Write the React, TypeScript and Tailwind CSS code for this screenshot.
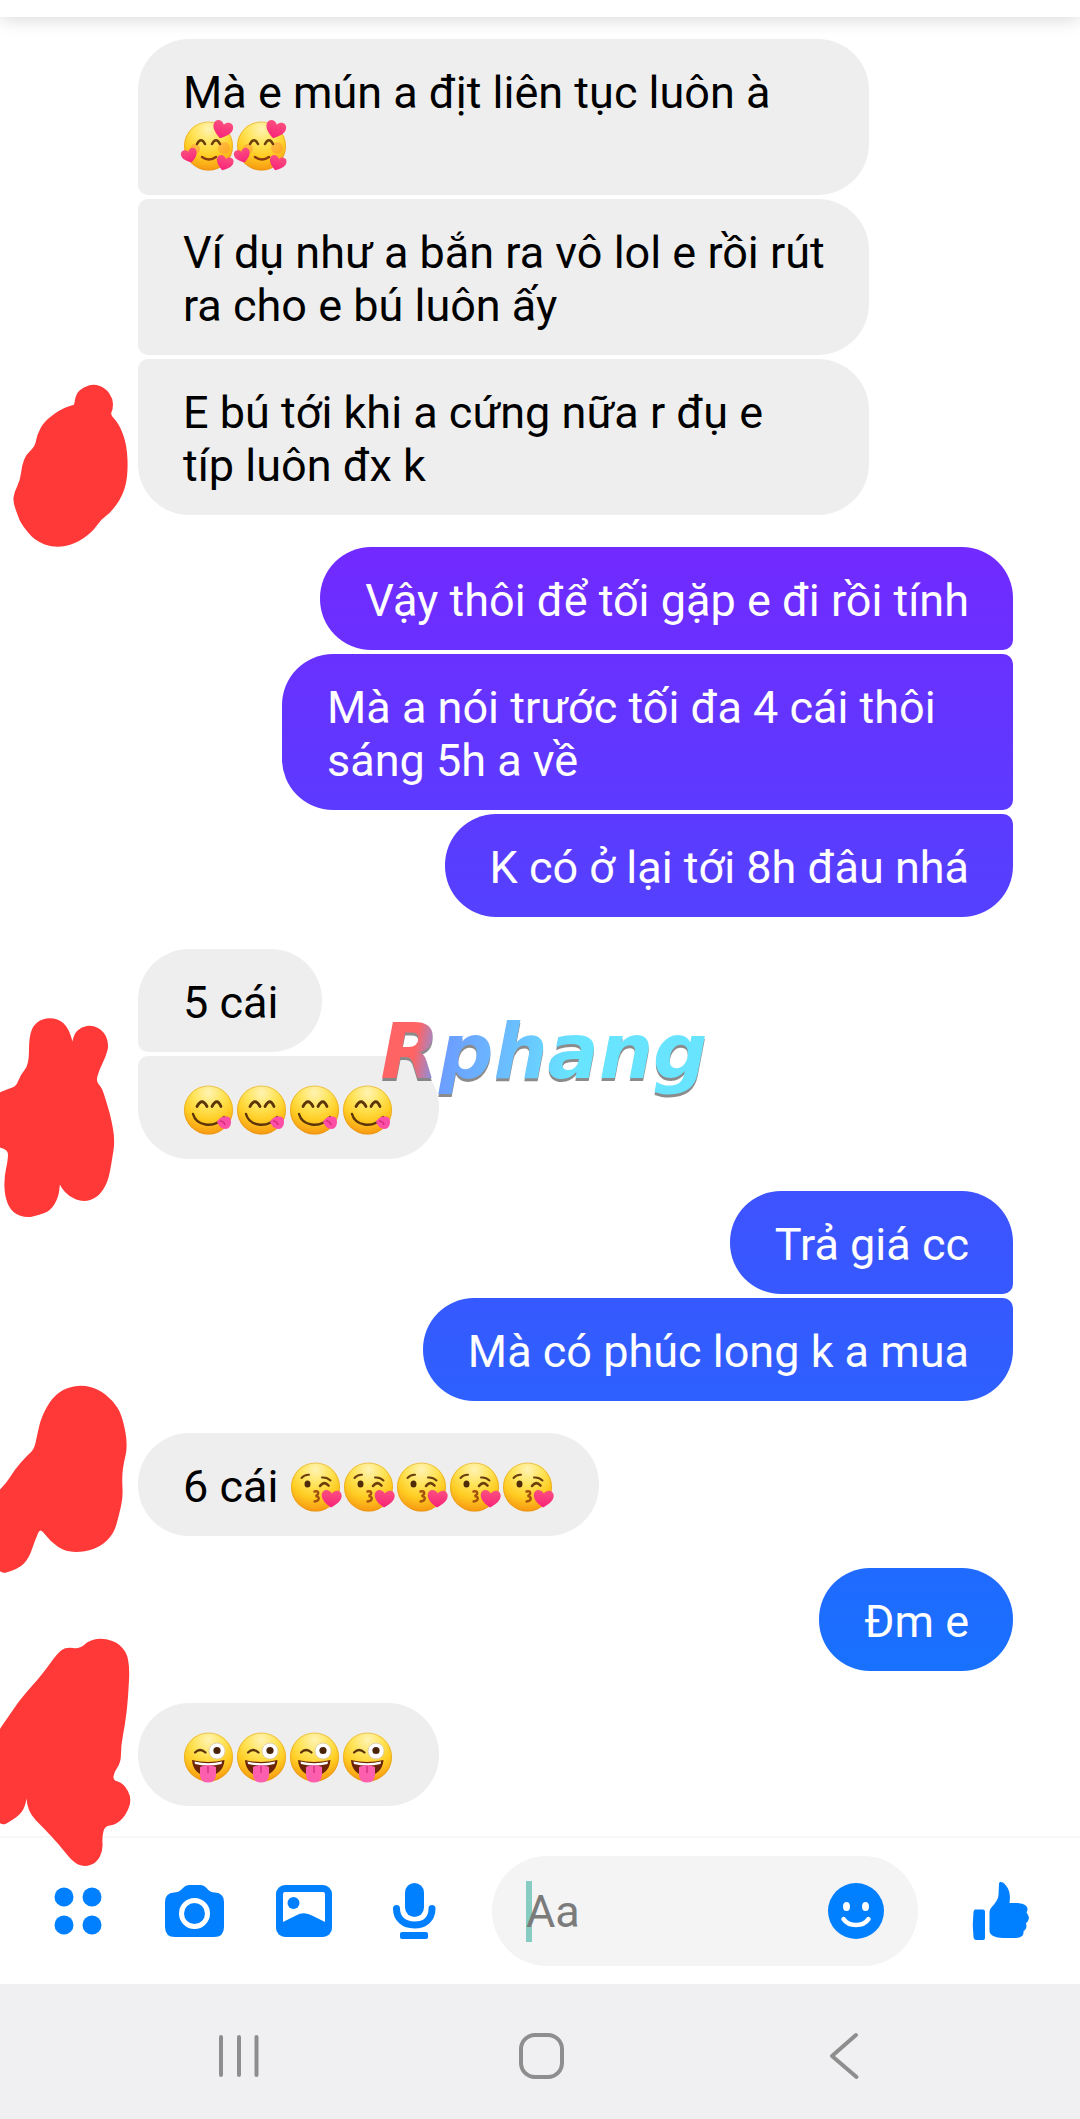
import type { ReactNode } from "react";

type EmojiName = "hearts" | "yum" | "kiss" | "zany";

const emojiLabels: Record<EmojiName, string> = {
  hearts: "🥰",
  yum: "😋",
  kiss: "😘",
  zany: "😜",
};

function Heart({ at, size = 1, turn = 0 }: { at: string; size?: number; turn?: number }) {
  return (
    <path
      d="M0 9C-5 6-10 2-10-3C-10-9-3-10 0-5C3-10 10-9 10-3C10 2 5 6 0 9Z"
      fill="url(#heart)"
      transform={`translate(${at}) rotate(${turn}) scale(${size})`}
    />
  );
}

const faces: Record<EmojiName, ReactNode> = {
  hearts: (
    <>
      <circle cx="12" cy="30" r="5" fill="#ff7a3c" opacity="0.35" />
      <circle cx="41" cy="29" r="6" fill="#ff7a3c" opacity="0.35" />
      <g fill="none" stroke="#6b3e0c" strokeWidth="2.6" strokeLinecap="round">
        <path d="M14 25Q18 17.500 22 25" />
        <path d="M29 25Q33 17.500 37 25" />
        <path d="M19 38Q26 43 33 38" stroke="#8a3a10" />
      </g>
      <Heart at="39.500 10.500" turn={16} />
      <Heart at="6.500 36.500" size={0.8} turn={-18} />
      <Heart at="41.500 44" size={0.84} turn={18} />
    </>
  ),
  yum: (
    <>
      <g fill="none" stroke="#5c340a" strokeWidth="2.800" strokeLinecap="round">
        <path d="M14 23.500Q19 14 24 23.500" />
        <path d="M29 23.500Q34 14 38 23.500" />
        <path d="M10 31C13 42 30 47 41 34" strokeWidth="2.400" />
      </g>
      <path d="M34 39C36 34 43 32 47 35C49 39 48 45 43 46C38 46 36 43 34 39Z" fill="#fc4fa5" />
      <path d="M37 38Q41 38 42 42" fill="none" stroke="#d92b7c" strokeWidth="1.500" />
    </>
  ),
  kiss: (
    <>
      <g fill="none" stroke="#6b3e0c" strokeLinecap="round" strokeWidth="2">
        <path d="M11.500 18Q14.500 14.500 19 14.800" />
        <path d="M32 17.500Q37 17 40.500 20.500" />
        <path d="M30 26Q34 20.500 38.500 25.500" strokeWidth="2.600" />
        <path
          d="M24.500 31.500C29 30 29.500 34.500 25.500 36C30 36 30 41 24.500 41.500"
          stroke="#a3520f"
          strokeWidth="2.400"
        />
      </g>
      <ellipse cx="17.500" cy="24" rx="3" ry="3.600" fill="#4f2b08" />
      <Heart at="41.500 38.500" turn={4} />
    </>
  ),
  zany: (
    <>
      <path d="M12 22.500Q17 17.500 22.500 22.500" fill="none" stroke="#5c340a" strokeWidth="2.200" strokeLinecap="round" />
      <circle cx="34" cy="21" r="8" fill="#fff" stroke="#d9c9a4" strokeWidth="0.800" />
      <circle cx="34" cy="20.500" r="3.600" fill="#4a2409" />
      <path d="M9 30Q25 34 41.500 30C41 40 33.500 46 25 46C16.500 46 9.500 40 9 30Z" fill="#6b2408" />
      <path d="M11.500 31.500Q25 35 39 31.500L38.500 34Q25 37 12 34Z" fill="#fff" />
      <path d="M17 37Q25 33 33 37V45Q32.500 52.500 25 52.500Q17.500 52.500 17 45Z" fill="#fb5fae" />
      <path d="M25 36V43" stroke="#d63384" strokeWidth="1.500" />
    </>
  ),
};

function Emoji({ name }: { name: EmojiName }) {
  return (
    <svg
      role="img"
      aria-label={emojiLabels[name]}
      viewBox="0 0 53 53"
      className="inline-block size-[53px] overflow-visible align-top"
    >
      <circle cx="25.500" cy="27" r="24.500" fill="url(#face)" />
      <circle cx="25.500" cy="27" r="24" fill="none" stroke="#d8901a" strokeOpacity="0.45" />
      {faces[name]}
    </svg>
  );
}

function Emojis({ name, count }: { name: EmojiName; count: number }) {
  return (
    <span className="whitespace-nowrap">
      {Array.from({ length: count }, (_, i) => (
        <Emoji key={i} name={name} />
      ))}
    </span>
  );
}

type Group = { mine: boolean; messages: ReactNode[] };

const groups: Group[] = [
  {
    mine: false,
    messages: [
      <>
        Mà e mún a địt liên tục luôn à <Emojis name="hearts" count={2} />
      </>,
      <>
        <span className="whitespace-nowrap">Ví dụ như a bắn ra vô lol e rồi rút</span> ra cho e bú luôn ấy
      </>,
      "E bú tới khi a cứng nữa r đụ e típ luôn đx k",
    ],
  },
  {
    mine: true,
    messages: [
      "Vậy thôi để tối gặp e đi rồi tính",
      "Mà a nói trước tối đa 4 cái thôi sáng 5h a về",
      "K có ở lại tới 8h đâu nhá",
    ],
  },
  { mine: false, messages: ["5 cái", <Emojis name="yum" count={4} />] },
  { mine: true, messages: ["Trả giá cc", "Mà có phúc long k a mua"] },
  {
    mine: false,
    messages: [
      <>
        6 cái <Emojis name="kiss" count={5} />
      </>,
    ],
  },
  { mine: true, messages: ["Đm e"] },
  { mine: false, messages: [<Emojis name="zany" count={4} />] },
];

function MessageGroup({ mine, messages }: Group) {
  return (
    <li>
      <ul className={mine ? "flex flex-col items-end gap-1" : "flex flex-col items-start gap-1"}>
        {messages.map((message, i) => {
          const first = i === 0;
          const last = i === messages.length - 1;
          const look = mine
            ? "rounded-l-[51px] bg-[linear-gradient(#712aff_26%,#1871ff_79%)] bg-fixed text-white"
            : "rounded-r-[51px] bg-[#eeeeee] text-black";
          const top = mine
            ? first ? "rounded-tr-[51px]" : "rounded-tr-[10px]"
            : first ? "rounded-tl-[51px]" : "rounded-tl-[10px]";
          const bottom = mine
            ? last ? "rounded-br-[51px]" : "rounded-br-[10px]"
            : last ? "rounded-bl-[51px]" : "rounded-bl-[10px]";
          return (
            <li
              key={i}
              className={`max-w-[731px] pt-[27px] pr-11 pb-[23px] pl-[45px] text-[45px] leading-[53px] ${look} ${top} ${bottom}`}
            >
              {message}
            </li>
          );
        })}
      </ul>
    </li>
  );
}

type Point = [number, number];

// outlines of the brush marks over the avatars
const scribbles: Point[][] = [
  [[75, 406], [77, 394], [84, 388], [94, 385], [105, 389], [112, 399], [112, 409], [109, 415], [118, 424], [126, 445], [127, 475], [122, 495], [110, 512], [100, 519], [92, 531], [75, 543], [55, 547], [35, 540], [22, 523], [19, 516], [14, 502], [15, 493], [21, 481], [23, 465], [27, 455], [36, 447], [38, 435], [45, 422], [60, 411], [72, 406]],
  [[-6, 1096], [8, 1090], [17, 1087], [21, 1076], [30, 1065], [30, 1036], [36, 1023], [50, 1018], [64, 1023], [71, 1038], [72, 1048], [75, 1034], [82, 1028], [92, 1026], [103, 1032], [108, 1044], [105, 1056], [98, 1070], [95, 1082], [101, 1088], [106, 1104], [110, 1118], [114, 1140], [111, 1160], [107, 1182], [97, 1197], [83, 1201], [70, 1196], [62, 1187], [59, 1180], [58, 1196], [50, 1210], [38, 1214], [27, 1217], [13, 1212], [6, 1198], [5, 1178], [9, 1160], [9, 1149], [-6, 1145]],
  [[-6, 1497], [7, 1484], [15, 1471], [27, 1457], [35, 1450], [38, 1436], [42, 1418], [53, 1398], [66, 1389], [82, 1386], [98, 1390], [112, 1401], [121, 1415], [127, 1445], [122, 1466], [121, 1480], [122, 1497], [118, 1515], [113, 1533], [101, 1545], [85, 1551], [66, 1551], [51, 1541], [40, 1526], [34, 1540], [28, 1558], [18, 1568], [-6, 1575]],
  [[-6, 1739], [10, 1716], [21, 1700], [43, 1675], [58, 1654], [66, 1648], [80, 1650], [90, 1641], [104, 1639], [120, 1645], [129, 1660], [127, 1700], [124, 1725], [120, 1745], [120, 1762], [113, 1772], [112, 1781], [123, 1784], [131, 1799], [125, 1815], [115, 1824], [104, 1825], [101, 1837], [102, 1850], [96, 1862], [84, 1866], [73, 1861], [60, 1844], [45, 1828], [28, 1811], [27, 1785], [25, 1805], [18, 1816], [-6, 1829]],
];

function smooth(points: Point[]) {
  const mid = ([ax, ay]: Point, [bx, by]: Point) => `${(ax + bx) / 2} ${(ay + by) / 2}`;
  const start = mid(points[points.length - 1], points[0]);
  const curves = points.map((p, i) => `Q${p[0]} ${p[1]} ${mid(p, points[(i + 1) % points.length])}`);
  return `M${start}${curves.join("")}Z`;
}

function Composer() {
  return (
    <form
      className="flex items-center gap-12 border-t-2 border-[#f7f7f7] bg-white py-[18px] pr-[50px] pl-12 text-[#0080ff]"
      onSubmit={(e) => e.preventDefault()}
    >
      <div className="flex items-center gap-[50px]">
        <button type="button" aria-label="More" className="mr-1.5">
          <svg viewBox="0 0 60 60" className="size-[60px]" fill="currentColor">
            <circle cx="16" cy="16" r="9.500" />
            <circle cx="44" cy="16" r="9.500" />
            <circle cx="16" cy="44" r="9.500" />
            <circle cx="44" cy="44" r="9.500" />
          </svg>
        </button>
        <button type="button" aria-label="Camera">
          <svg viewBox="0 0 60 60" className="size-[60px]" fill="currentColor">
            <path d="M10 11.500Q15 11.500 19 7Q21.500 4 25 4H36Q40 4 42.500 7Q46 11.500 51 11.500Q60 12 60 21V46Q60 56 50 56H11Q1 56 1 46V21Q1 12 10 11.500Z" />
            <circle cx="30.500" cy="32.500" r="13" fill="none" stroke="#fff" strokeWidth="5" />
          </svg>
        </button>
        <button type="button" aria-label="Gallery">
          <svg viewBox="0 0 60 60" className="size-[60px]">
            <rect x="2" y="4" width="56" height="52" rx="9" fill="currentColor" />
            <path d="M9 13Q9 11 11 11H49Q51 11 51 13V41L39 35Q30 30 22 34.500L9 41Z" fill="#fff" />
            <circle cx="19.500" cy="22" r="6" fill="currentColor" />
          </svg>
        </button>
        <button type="button" aria-label="Voice message">
          <svg viewBox="0 0 60 60" className="size-[60px]" fill="currentColor">
            <rect x="21" y="2" width="19" height="34" rx="9.500" />
            <path d="M12.500 27.500C12.500 38 20 44 30.500 44S48 38 48 27.500" fill="none" stroke="currentColor" strokeWidth="7" strokeLinecap="round" />
            <rect x="16" y="51" width="28" height="7" rx="2" />
          </svg>
        </button>
      </div>
      <div className="mr-1 flex h-[110px] min-w-0 flex-1 items-center rounded-full bg-[#f4f4f4] px-[34px]">
        <div className="relative min-w-0 flex-1">
          <span className="absolute inset-y-0 left-0 w-1.5 bg-[#86ccc3]" />
          <input
            type="text"
            aria-label="Message"
            placeholder="Aa"
            className="relative block h-[61px] w-full bg-transparent text-[45px] leading-[61px] text-black outline-none placeholder:text-[#7b7b7b]"
          />
        </div>
        <button type="button" aria-label="Emoji">
          <svg viewBox="0 0 56 56" className="size-14">
            <circle cx="28" cy="28" r="28" fill="currentColor" />
            <ellipse cx="18.500" cy="23.500" rx="3.500" ry="4.500" fill="#fff" />
            <ellipse cx="37.500" cy="23.500" rx="3.500" ry="4.500" fill="#fff" />
            <path d="M15.500 36Q19.500 42 28 42T40.500 36" fill="none" stroke="#fff" strokeWidth="4.500" strokeLinecap="round" />
          </svg>
        </button>
      </div>
      <button type="button" aria-label="Like">
        <svg viewBox="0 0 60 60" className="size-[60px]" fill="currentColor">
          <path d="M5 28.500H13Q15 28.500 15 30.500V57Q15 59 13 59H6Q4 59 3.500 56Q2 44 3.500 31Q3.800 28.500 5 28.500Z" />
          <path d="M29 3C29 0 33 .5 36 4.500C40 9.500 40.500 15 39.500 22H46C52 22 57.500 24 57.500 28Q57.500 30 56.500 31.500Q60 36 58.500 38.500Q58 41 56 42Q57.500 48 53.500 50Q54.500 56.500 46 57H33C25 57 19.500 54 19.500 50V31C19.500 26 28 22 28.500 14Z" />
        </svg>
      </button>
    </form>
  );
}

function SystemNav() {
  return (
    <nav className="flex justify-between bg-[#f0f0f2] px-52 pt-[42px] pb-[33px] text-[#8e8e8e]">
      <button type="button" aria-label="Recents">
        <svg viewBox="0 0 60 60" className="size-[60px]" stroke="currentColor" strokeWidth="4" strokeLinecap="round">
          <path d="M13 11V49M31 11V49M48.500 11V49" />
        </svg>
      </button>
      <button type="button" aria-label="Home">
        <svg viewBox="0 0 60 60" className="size-[60px]" fill="none" stroke="currentColor" strokeWidth="4">
          <rect x="11" y="9" width="41" height="42" rx="14" />
        </svg>
      </button>
      <button type="button" aria-label="Back">
        <svg viewBox="0 0 60 60" className="size-[60px]" fill="none" stroke="currentColor" strokeWidth="4" strokeLinecap="round" strokeLinejoin="round">
          <path d="M44 9L20 30L44.500 51" />
        </svg>
      </button>
    </nav>
  );
}

export default function App() {
  return (
    <div className="relative flex min-h-screen flex-col overflow-hidden bg-white font-['Roboto','Noto_Sans',sans-serif]">
      <svg className="absolute size-0" aria-hidden="true">
        <defs>
          <radialGradient id="face" cx="0.5" cy="0.15" r="0.87">
            <stop offset="0" stopColor="#fff3b4" />
            <stop offset="0.35" stopColor="#ffe45a" />
            <stop offset="0.65" stopColor="#ffcc22" />
            <stop offset="1" stopColor="#f79410" />
          </radialGradient>
          <linearGradient id="heart" x2="0" y2="1">
            <stop offset="0" stopColor="#fb4f7f" />
            <stop offset="1" stopColor="#f8227a" />
          </linearGradient>
        </defs>
      </svg>

      <header className="h-[17px] bg-white shadow-[0_2px_18px_rgba(0,0,0,0.16)]" />

      <main className="flex-1 pt-[22px] pr-[67px] pb-[30px] pl-[138px]">
        <ul className="flex flex-col gap-8">
          {groups.map((group, i) => (
            <MessageGroup key={i} {...group} />
          ))}
        </ul>
      </main>

      <Composer />
      <SystemNav />

      <svg
        className="pointer-events-none absolute top-0 left-0 h-[2119px] w-[138px]"
        viewBox="0 0 138 2119"
        fill="#ff3838"
        stroke="#ff3838"
        strokeWidth="2"
        aria-hidden="true"
      >
        {scribbles.map((points, i) => (
          <path key={i} d={smooth(points)} />
        ))}
      </svg>

      <div className="pointer-events-none absolute inset-x-0 top-[1008px] flex justify-center">
        <span className="bg-[linear-gradient(100deg,#ff6464_14%,#6c9cff_22%,#6ac0ff_42%,#68e4ff_60%)] bg-clip-text pl-2 font-['DejaVu_Sans',sans-serif] text-[76px] leading-[88px] font-bold text-transparent italic drop-shadow-[0_3px_0_rgba(90,90,90,0.7)]">
          Rphang
        </span>
      </div>
    </div>
  );
}
